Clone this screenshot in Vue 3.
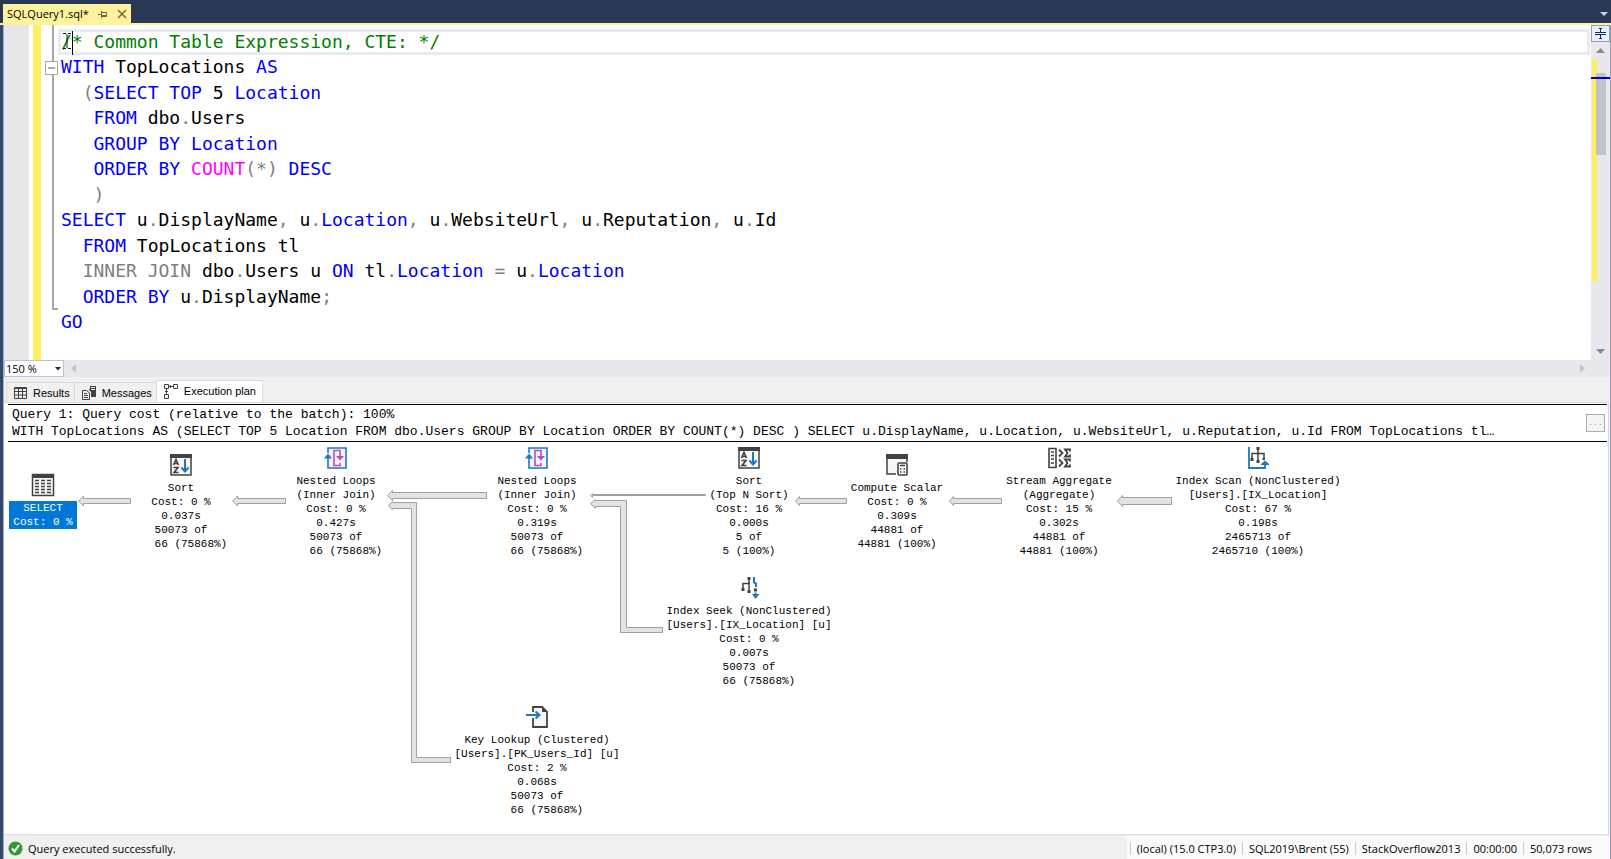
<script setup>
import { ref } from 'vue'

const zoomLevel = ref('150 %')
const activeTab = ref('plan')

const k = (t) => ({ t, c: 'kw' })
const g = (t) => ({ t, c: 'op' })
const p = (t) => ({ t, c: 'id' })

const codeLines = [
  [{ t: '/* Common Table Expression, CTE: */', c: 'cm' }],
  [k('WITH'), p(' TopLocations '), k('AS')],
  [g('  ('), k('SELECT TOP'), p(' 5 '), k('Location')],
  [k('   FROM'), p(' dbo'), g('.'), p('Users')],
  [k('   GROUP BY Location')],
  [k('   ORDER BY '), { t: 'COUNT', c: 'fn' }, g('(*)'), k(' DESC')],
  [g('   )')],
  [k('SELECT'), p(' u'), g('.'), p('DisplayName'), g(','), p(' u'), g('.'), k('Location'), g(','), p(' u'), g('.'), p('WebsiteUrl'), g(','), p(' u'), g('.'), p('Reputation'), g(','), p(' u'), g('.'), p('Id')],
  [k('  FROM'), p(' TopLocations tl')],
  [g('  INNER JOIN'), p(' dbo'), g('.'), p('Users u '), k('ON'), p(' tl'), g('.'), k('Location'), g(' = '), p('u'), g('.'), k('Location')],
  [k('  ORDER BY'), p(' u'), g('.'), p('DisplayName'), g(';')],
  [k('GO')],
]

const planNodes = [
  { id: 'select', icon: 'table', x: 39, y: 31, selected: true, lines: ['SELECT', 'Cost: 0 %'] },
  { id: 'sort', icon: 'sort', x: 177, y: 11, lines: ['Sort', 'Cost: 0 %', '0.037s', '50073 of', '   66 (75868%)'] },
  { id: 'loop1', icon: 'loops', x: 332, y: 4, lines: ['Nested Loops', '(Inner Join)', 'Cost: 0 %', '0.427s', '50073 of', '   66 (75868%)'] },
  { id: 'loop2', icon: 'loops', x: 533, y: 4, lines: ['Nested Loops', '(Inner Join)', 'Cost: 0 %', '0.319s', '50073 of', '   66 (75868%)'] },
  { id: 'topn', icon: 'sort', x: 745, y: 4, lines: ['Sort', '(Top N Sort)', 'Cost: 16 %', '0.000s', '5 of', '5 (100%)'] },
  { id: 'scalar', icon: 'scalar', x: 893, y: 11, lines: ['Compute Scalar', 'Cost: 0 %', '0.309s', '44881 of', '44881 (100%)'] },
  { id: 'agg', icon: 'aggregate', x: 1055, y: 4, lines: ['Stream Aggregate', '(Aggregate)', 'Cost: 15 %', '0.302s', '44881 of', '44881 (100%)'] },
  { id: 'scan', icon: 'scan', x: 1254, y: 4, lines: ['Index Scan (NonClustered)', '[Users].[IX_Location]', 'Cost: 67 %', '0.198s', '2465713 of', '2465710 (100%)'] },
  { id: 'seek', icon: 'seek', x: 745, y: 134, lines: ['Index Seek (NonClustered)', '[Users].[IX_Location] [u]', 'Cost: 0 %', '0.007s', '50073 of', '   66 (75868%)'] },
  { id: 'lookup', icon: 'lookup', x: 533, y: 263, lines: ['Key Lookup (Clustered)', '[Users].[PK_Users_Id] [u]', 'Cost: 2 %', '0.068s', '50073 of', '   66 (75868%)'] },
]

const arrows = [
  'M74.5 59L79.5 54V56.500H126.500V61.500H79.500V64Z',
  'M228.500 59L233.500 54V56.500H281.500V61.500H233.500V64Z',
  'M383.500 53.500L388.500 48.500V50.500H482.500V56.500H388.500V58.500Z',
  'M384.500 63.500L388.500 59.500V60.500H412.500V315.500H446.500V320.500H407.500V66.500H388.500V68Z',
  'M586.500 53.500L588.500 51.500V52.500H701.500V53.500H588.500V55.500Z',
  'M586.500 61.500L591.500 57.500V58.500H622.500V185.500H658.500V190.500H616.500V64.500H591.500V66.500Z',
  'M791.500 59L795.500 54.500V56.500H842.500V61.500H795.500V63.500Z',
  'M945.500 59L949.500 54.500V56.500H997.500V61.500H949.500V63.500Z',
  'M1113.500 59L1118.500 53.500V55.500H1167.500V62.500H1118.500V64.500Z',
]

const serverInfo = ['(local) (15.0 CTP3.0)', 'SQL2019\\Brent (55)', 'StackOverflow2013', '00:00:00', '50,073 rows']
</script>

<template>
  <div class="window">
    <header class="titlebar">
      <div class="doc-tab">
        <span>SQLQuery1.sql*</span>
        <button type="button" aria-label="Pin tab">
          <svg width="10" height="8" viewBox="0 0 10 8" fill="none" stroke="#75683f"><path d="M0 4.500H3M3.500 1V8M4 2.500H8.500V6.500H4M4 5.500H8" /></svg>
        </button>
        <button type="button" aria-label="Close tab">
          <svg width="10" height="10" viewBox="0 0 10 10" fill="none" stroke="#75683f" stroke-width="1.500"><path d="M1 1L9 9M9 1L1 9" /></svg>
        </button>
      </div>
      <button type="button" class="window-list" aria-label="Open documents">
        <svg width="8" height="4" viewBox="0 0 8 4"><path d="M0 0H8L4 4Z" fill="#ced4dd" /></svg>
      </button>
    </header>

    <main class="body">
      <section class="editor" aria-label="Query editor">
        <div class="indicator"></div>
        <div class="changes"></div>
        <div class="outline">
          <button type="button" aria-label="Collapse region">
            <svg width="13" height="14" viewBox="0 0 13 14" fill="#fff" stroke="#a5a5a5"><path d="M.5 .5H12.500V13.500H.5Z" /><path d="M3 7H10" stroke="#555" /></svg>
          </button>
          <div class="outline-end"></div>
        </div>
        <div class="code">
          <div v-for="(line, i) in codeLines" :key="i" class="row" :class="{ current: i === 0 }">
            <span v-for="(s, j) in line" :key="j" :class="s.c">{{ s.t }}</span>
            <svg v-if="i === 0" class="cursor" width="14" height="24" viewBox="0 0 14 24" fill="none">
              <path d="M2 2.500H5M7 2.500H10M6 3V17M2 17.500H5M7 17.500H10" stroke="#111" />
              <path d="M11.500 0V24" stroke="#000" />
            </svg>
          </div>
        </div>
        <div class="vscroll">
          <button type="button" class="split" aria-label="Split editor">
            <svg width="11" height="13" viewBox="0 0 11 13" stroke="#1b293e"><path d="M0 5.500H11M0 7.500H11M5.500 1V5M5.500 8V12M4 1.500H7M4 11.500H7" /></svg>
          </button>
          <button type="button" class="arrow" aria-label="Scroll up"><svg width="9" height="5" viewBox="0 0 9 5"><path d="M0 5L4.500 0L9 5Z" fill="#868999" /></svg></button>
          <div class="track"><i class="mark"></i><i class="thumb"></i><i class="caret"></i></div>
          <button type="button" class="arrow" aria-label="Scroll down"><svg width="9" height="5" viewBox="0 0 9 5"><path d="M0 0L4.500 5L9 0Z" fill="#868999" /></svg></button>
        </div>
      </section>

      <div class="hscroll">
        <label class="zoom">
          <select v-model="zoomLevel" aria-label="Zoom level"><option>150 %</option><option>100 %</option></select>
          <svg width="6" height="4" viewBox="0 0 6 4"><path d="M0 0H6L3 3.500Z" fill="#1b293e" /></svg>
        </label>
        <button type="button" aria-label="Scroll left"><svg width="5" height="9" viewBox="0 0 5 9"><path d="M5 0V9L0 4.500Z" fill="#c5c6ce" /></svg></button>
        <button type="button" class="right" aria-label="Scroll right"><svg width="5" height="9" viewBox="0 0 5 9"><path d="M0 0V9L5 4.500Z" fill="#c5c6ce" /></svg></button>
      </div>

      <nav class="tabs">
        <button type="button" :class="{ active: activeTab === 'results' }" @click="activeTab = 'results'">
          <svg width="13" height="12" viewBox="0 0 13 12" fill="none" stroke="#424242"><path d="M.5 .5H12.500V11.500H.5Z M0 1.500H13M0 4.500H13M0 8H13M4.500 2V12M8.500 2V12" /></svg>
          Results
        </button>
        <button type="button" :class="{ active: activeTab === 'messages' }" @click="activeTab = 'messages'">
          <svg width="14" height="14" viewBox="0 0 14 14" fill="none" stroke="#424242"><path d="M.5 4.500H4.500L7.500 7V13.500H.5ZM2 7.500H5M2 9.500H6M2 11.500H6" /><path d="M8 0H14V11H9V6L7 4V3H8Z" fill="#424242" stroke="none" /><path d="M9 1.500H13M9 3.500H13" stroke="#eee" /></svg>
          Messages
        </button>
        <button type="button" :class="{ active: activeTab === 'plan' }" @click="activeTab = 'plan'">
          <svg width="14" height="15" viewBox="0 0 14 15" fill="none" stroke="#424242"><path d="M.5 .5H4.500V4.500H.5ZM9.500 .5H13.500V4.500H9.500ZM.5 10.500H4.500V14.500H.5ZM5 2.500H9M6.500 1V4M2.500 5V10M1 7.500H4" /></svg>
          Execution plan
        </button>
      </nav>

      <section class="plan">
        <div class="query">
          <div class="query-text">
            <p>Query 1: Query cost (relative to the batch): 100%</p>
            <p>WITH TopLocations AS (SELECT TOP 5 Location FROM dbo.Users GROUP BY Location ORDER BY COUNT(*) DESC ) SELECT u.DisplayName, u.Location, u.WebsiteUrl, u.Reputation, u.Id FROM TopLocations tl…</p>
          </div>
          <button type="button" aria-label="Show full query">...</button>
        </div>
        <div class="canvas">
          <svg class="links" width="100%" height="100%" fill="#e2e2e2" stroke="#a0a0a0"><path v-for="d in arrows" :key="d" :d="d" /></svg>
          <article v-for="n in planNodes" :key="n.id" class="node" :class="{ selected: n.selected }" :style="{ left: n.x + 'px', top: n.y + 'px' }">
            <svg width="24" height="24" viewBox="0 0 24 24" fill="none">
              <template v-if="n.icon === 'table'">
                <path d="M1.500 1.500H22.500V22.500H1.500Z" fill="#f6f6f6" stroke="#424242" stroke-width="1.500" />
                <path d="M1 1H23V5H1Z" fill="#424242" />
                <path d="M4 7.500H20M4 10.500H20M4 13.500H20M4 16.500H20M4 19.500H20" stroke="#424242" stroke-width="1.300" stroke-dasharray="4 2" />
              </template>
              <template v-else-if="n.icon === 'sort'">
                <path d="M2 2H22V22H2Z" fill="#f6f6f6" stroke="#424242" stroke-width="1.500" />
                <path d="M1 1H23V5H1Z" fill="#424242" />
                <path d="M4.500 12L7 6.500L9.500 12M5.500 10.500H8.500M4.500 14.500H9L5 19.500H9.500" stroke="#424242" stroke-width="1.600" />
                <path d="M16 6V18M12.500 14.500L16 18.500L19.500 14.500" stroke="#1f76c2" stroke-width="2" />
              </template>
              <template v-else-if="n.icon === 'loops'">
                <path d="M4 7V2H22V22H4V10" fill="#f3f3f8" stroke="#1f76c2" stroke-width="1.600" />
                <path d="M0 12.500L4 7.500L8 12.500" fill="#1f76c2" />
                <path d="M16 17V19.500H10V4.500H16V10" stroke="#bd4bbd" stroke-width="1.600" />
                <path d="M12 10H20L16 14.500Z" fill="#bd4bbd" />
              </template>
              <template v-else-if="n.icon === 'scalar'">
                <path d="M11 21H2V4H22V9" fill="#f6f6f6" stroke="#424242" stroke-width="1.500" />
                <path d="M1 1H23V6H1Z" fill="#424242" />
                <rect x="13" y="10" width="9" height="12" rx="1" fill="#f6f6f6" stroke="#424242" stroke-width="1.600" />
                <path d="M15 12.500H20M15 16H16.500M18.500 16H20M15 19H16.500M18.500 19H20" stroke="#424242" stroke-width="1.500" />
              </template>
              <template v-else-if="n.icon === 'aggregate'">
                <path d="M2 2.500H9V21.500H2Z" fill="#f6f6f6" stroke="#424242" stroke-width="1.600" />
                <path d="M4 6H7M4 9.500H7M4 13H7M4 17H7" stroke="#424242" stroke-width="1.500" />
                <path d="M12 3.500L15.500 7L12 10.500M12 13.500L15.500 17L12 20.500" stroke="#424242" stroke-width="1.800" />
                <path d="M23 5.500V3.500H18L20.500 7L18 10.500H23V8.500M23 15.500V13.500H18L20.500 17L18 20.500H23V18.500" stroke="#424242" stroke-width="1.800" />
              </template>
              <template v-else-if="n.icon === 'scan'">
                <path d="M3 1V22H19V18" stroke="#1f76c2" stroke-width="1.800" />
                <path d="M15 18L19 14.500L23 18V19H15Z" fill="#1f76c2" />
                <path d="M12 2V16M6 14V7.500H18V13" stroke="#424242" stroke-width="1.500" />
                <path d="M10.500 1H13.500V4H10.500ZM10.500 14H13.500V17H10.500ZM4.500 12H7.500V15H4.500ZM16.500 12H19V14H16.500Z" fill="#424242" />
              </template>
              <template v-else-if="n.icon === 'seek'">
                <path d="M12 2V16M6 14V7.500H13" stroke="#424242" stroke-width="1.500" />
                <path d="M10.500 1H13.500V4H10.500ZM10.500 14H13.500V17H10.500ZM4.500 12H7.500V15H4.500ZM17 12.500H20V15.500H17Z" fill="#424242" />
                <path d="M17 1V6.500L19 7.500V11" stroke="#1f76c2" stroke-width="2" />
                <path d="M15 18H17.500V16.500H19.500V18H22.500L18.500 23Z" fill="#1f76c2" />
              </template>
              <template v-else>
                <path d="M8 7V2H17L22 7V22H8V13" fill="#f6f6f6" stroke="#424242" stroke-width="1.800" />
                <path d="M17 1L23 7H17Z" fill="#424242" />
                <path d="M1 10H14M10.500 6.500L14.500 10L10.500 13.500" stroke="#1f76c2" stroke-width="2" />
              </template>
            </svg>
            <div class="node-text"><span v-for="(t, i) in n.lines" :key="i">{{ t }}</span></div>
          </article>
        </div>
      </section>

      <footer class="status">
        <div class="message">
          <svg width="15" height="15" viewBox="0 0 15 15" fill="none"><circle cx="7.500" cy="7.500" r="7" fill="#339933" /><path d="M4 7.500L6.500 10.500L11 4" stroke="#fff" stroke-width="2" /></svg>
          Query executed successfully.
        </div>
        <div class="info"><span v-for="s in serverInfo" :key="s">{{ s }}</span></div>
      </footer>
    </main>
  </div>
</template>

<style>
body { margin: 0; }
</style>

<style scoped>
* { box-sizing: border-box; }
button { padding: 0; border: 0; background: none; font: inherit; color: inherit; }
svg { display: block; flex: none; }
.window { display: flex; flex-direction: column; min-height: 100vh; background: #35496a; font: 11px/16px "Open Sans", sans-serif; color: #000; }
.titlebar { display: flex; align-items: flex-end; justify-content: space-between; height: 25px; padding: 0 3px; background: #293955; border-bottom: 2px solid #fff29d; }
.doc-tab { display: flex; align-items: center; height: 19px; padding: 1px 4px 0 4px; gap: 9px; background: #fff29d; }
.window-list { padding: 0 0 7px; }
.body { flex: 1; display: flex; flex-direction: column; margin-left: 3px; border-left: 1px solid #a3aec4; border-right: 1px solid #8e9bbc; background: #f0f0f0; }

.editor { display: flex; height: 335px; background: #fff; }
.indicator { width: 25px; background: #e6e7e8; }
.changes { width: 8px; margin-left: 4px; background: #ffee62; }
.outline { display: flex; flex-direction: column; width: 17px; padding-left: 4px; }
.outline::before { content: ""; height: 36px; margin-left: 7px; border-left: 2px solid #a5a5a5; }
.outline-end { height: 235px; margin: 0 0 0 7px; width: 6px; border: solid #a5a5a5; border-width: 0 0 2px 2px; }
.code { flex: 1; display: grid; grid-auto-rows: 1fr; height: 306px; margin-top: 4px; font-family: "DejaVu Sans Mono", monospace; font-size: 18px; }
.row { position: relative; display: flex; align-items: center; padding-left: 3px; margin-right: 1px; white-space: pre; }
.current { border: 3px solid #eaeaf2; padding-left: 0; }
.cursor { position: absolute; left: 0; top: -1px; }
.kw { color: #00f; }
.op { color: #808080; }
.id { color: #000; }
.cm { color: #008000; }
.fn { color: #f0f; }
.vscroll { display: flex; flex-direction: column; width: 19px; background: #e8e8ec; }
.split { display: grid; place-items: center; height: 17px; background: #e6f0ff; border: 1px solid #8e9bbc; }
.arrow { display: grid; place-items: center; height: 17px; }
.track { position: relative; flex: 1; }
.track i { position: absolute; }
.mark { left: 1px; top: 0; width: 5px; height: 223px; background: #ffee62; }
.thumb { left: 5px; top: 14px; width: 10px; height: 82px; background: #c2c3c9; }
.caret { left: 0; right: 0; top: 18px; height: 2px; background: #0000cd; }

.hscroll { display: flex; align-items: center; gap: 7px; height: 17px; background: #e8e8ec; }
.zoom { position: relative; display: flex; align-items: center; width: 60px; height: 17px; border: 1px solid #b8c4dc; background: #fff; }
.zoom select { appearance: none; width: 100%; height: 15px; padding: 0 0 0 1px; border: 0; background: transparent; font: inherit; }
.zoom svg { position: absolute; right: 2px; }
.right { margin: 0 25px 0 auto; }

.tabs { display: flex; align-items: flex-end; height: 25px; padding-left: 2px; font-family: "Liberation Sans", sans-serif; }
.tabs button { display: flex; align-items: center; gap: 6px; height: 20px; padding: 1px 4px 0 7px; border: solid #dadada; border-width: 1px 0 0 1px; }
.tabs .active { height: 22px; padding: 0 6px 1px 7px; background: #fff; border-right-width: 1px; }

.plan { flex: 1; display: flex; flex-direction: column; margin-right: 1px; border: solid #dadada; border-width: 1px 1px 1px 0; background: #fff; font-family: "Liberation Mono", monospace; }
.query { display: flex; align-items: flex-start; justify-content: space-between; margin: 1px 1px 0 4px; border: solid #000; border-width: 1px 0; height: 38px; }
.query-text { flex: 1; padding: 1px 0 0 4px; font-size: 13px; white-space: nowrap; }
.query p { margin: 0; line-height: 17px; }
.query button { width: 19px; height: 18px; margin: 9px 2px 0 0; border: 1px solid #adadad; background: #f4f4f4; color: #a0a0a0; font-size: 8px; line-height: 14px; }
.canvas { position: relative; flex: 1; }
.links { position: absolute; left: 0; top: 0; }
.node { position: absolute; display: flex; flex-direction: column; align-items: center; gap: 4px; width: 200px; margin-left: -100px; font-size: 11px; line-height: 14px; }
.node-text { display: flex; flex-direction: column; align-items: center; white-space: pre; }
.selected .node-text { padding: 0 4px; background: #0078d7; color: #fff; }

.status { display: flex; justify-content: space-between; height: 23px; margin-top: 1px; }
.message { display: flex; align-items: center; gap: 5px; padding: 2px 0 0 4px; }
.info { display: flex; align-items: center; padding: 2px 12px 0 3px; background: #fafafa; }
.info span { padding: 0 6px; border-left: 1px solid #c8c8c8; line-height: 13px; }
</style>
